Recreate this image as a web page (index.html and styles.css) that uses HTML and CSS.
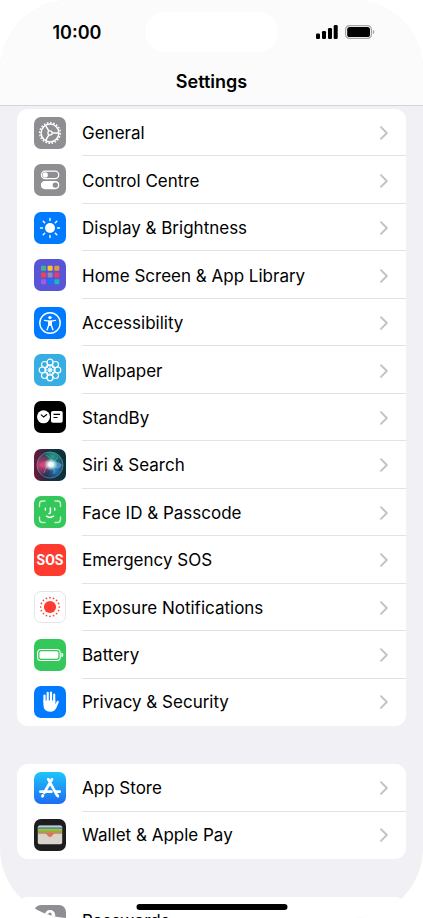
FILE: index.html
```html
<!DOCTYPE html>
<html lang="en-GB">
<head>
<meta charset="utf-8">
<meta name="viewport" content="width=device-width, initial-scale=1">
<title>Settings</title>
<link rel="stylesheet" href="styles.css">
</head>
<body>
<svg class="defs" aria-hidden="true">
  <defs>
    <symbol id="chevron" viewBox="0 0 8 14"><path d="M1 1.2 6.8 7 1 12.8" fill="none" stroke="#c2c2c5" stroke-width="1.9" stroke-linecap="round" stroke-linejoin="round"/></symbol>
    <radialGradient id="siri-pink" cx=".15" cy=".5" r=".5"><stop offset="0" stop-color="#d5427d"/><stop offset=".6" stop-color="#85305f" stop-opacity=".7"/><stop offset="1" stop-color="#35143a" stop-opacity="0"/></radialGradient>
    <radialGradient id="siri-green" cx=".6" cy=".2" r=".65"><stop offset="0" stop-color="#1fa78c"/><stop offset="1" stop-color="#176d72" stop-opacity="0"/></radialGradient>
    <radialGradient id="siri-blue" cx=".7" cy=".7" r=".5"><stop offset="0" stop-color="#2a86cc"/><stop offset="1" stop-color="#1b3f73" stop-opacity="0"/></radialGradient>
    <radialGradient id="siri-glow"><stop offset="0" stop-color="#fff"/><stop offset=".35" stop-color="#f2ffff" stop-opacity=".95"/><stop offset="1" stop-color="#b9f6f4" stop-opacity="0"/></radialGradient>
    <linearGradient id="siri-back"><stop offset="0" stop-color="#6d1738"/><stop offset=".5" stop-color="#192f46"/><stop offset="1" stop-color="#0b3038"/></linearGradient>
    <linearGradient id="store-back" x2="0" y2="1"><stop offset="0" stop-color="#1ec5fb"/><stop offset="1" stop-color="#1d6df2"/></linearGradient>
  </defs>
</svg>
<div class="phone">
  <header class="topbar">
    <div class="status">
      <time class="clock">10:00</time>
      <div class="island"></div>
      <div class="indicators">
        <svg width="22" height="14" viewBox="0 0 22 14" aria-hidden="true"><rect y="8.5" width="4" height="5.5" rx="1.2"/><rect x="6" y="6" width="4" height="8" rx="1.2"/><rect x="12" y="3" width="4" height="11" rx="1.2"/><rect x="17.7" width="4" height="14" rx="1.2"/></svg>
        <svg width="30" height="14" viewBox="0 0 30 14" aria-hidden="true"><rect x=".6" y=".6" width="25.8" height="12.8" rx="4" fill="#fbfbfb" stroke="#a6a6a6" stroke-width="1.2"/><rect x="2.2" y="2" width="22.8" height="10" rx="2.6"/><path d="M27.8 4.8q1.6.7 1.6 2.2t-1.6 2.2z" fill="#a6a6a6"/></svg>
      </div>
    </div>
    <h1 class="title">Settings</h1>
  </header>

  <main class="content">
    <ul class="card card-system">
      <li><a class="row" href="#general">
        <svg class="icon" viewBox="0 0 32 32" aria-hidden="true"><rect width="32" height="32" rx="7" fill="#8e8e93"/><g fill="none" stroke="#fff"><circle cx="16" cy="16" r="8.9" stroke-width="1.5"/><circle cx="16" cy="16" r="10.3" stroke-width="1.5" pathLength="40" stroke-dasharray="1 1"/><circle cx="16" cy="16" r="2.1" stroke-width="1.3"/><path d="M18.2 16h6.3M14.9 14.1l-3.2-5.5M14.9 17.9l-3.2 5.5" stroke-width="1.5"/></g></svg>
        <span class="detail"><span class="label">General</span><svg class="chevron" aria-hidden="true"><use href="#chevron"/></svg></span></a></li>
      <li><a class="row" href="#control-centre">
        <svg class="icon" viewBox="0 0 32 32" aria-hidden="true"><rect width="32" height="32" rx="7" fill="#8e8e93"/><rect x="7.5" y="7.2" width="17.2" height="7.4" rx="3.7" fill="none" stroke="#fff" stroke-width="1.3"/><circle cx="11.3" cy="10.9" r="2.6" fill="#fff"/><rect x="6.9" y="17" width="18.4" height="8.2" rx="4.1" fill="#fff"/><circle cx="21.3" cy="21.1" r="2.7" fill="#8e8e93"/></svg>
        <span class="detail"><span class="label">Control Centre</span><svg class="chevron" aria-hidden="true"><use href="#chevron"/></svg></span></a></li>
      <li><a class="row" href="#display">
        <svg class="icon" viewBox="0 0 32 32" aria-hidden="true"><rect width="32" height="32" rx="7" fill="#007aff"/><circle cx="16" cy="16" r="5" fill="#fff"/><path d="M16 6.5v2M16 23.5v2M6.5 16h2M23.5 16h2M9.2 9.2l1.5 1.5M21.3 21.3l1.5 1.5M9.2 22.8l1.5-1.5M21.3 10.7l1.5-1.5" stroke="#fff" stroke-width="1.4" stroke-linecap="round"/></svg>
        <span class="detail"><span class="label">Display &amp; Brightness</span><svg class="chevron" aria-hidden="true"><use href="#chevron"/></svg></span></a></li>
      <li><a class="row" href="#home-screen">
        <svg class="icon" viewBox="0 0 32 32" aria-hidden="true"><rect width="32" height="32" rx="7" fill="#5856d6"/><rect x="7" y="6.7" width="5" height="5" rx="1" fill="#40b78a"/><rect x="13.6" y="6.7" width="5" height="5" rx="1" fill="#f9c827"/><rect x="20.3" y="6.7" width="5" height="5" rx="1" fill="#ee9538"/><rect x="7" y="13.5" width="5" height="5" rx="1" fill="#ed4550"/><rect x="13.6" y="13.5" width="5" height="5" rx="1" fill="#908eb0"/><rect x="20.3" y="13.5" width="5" height="5" rx="1" fill="#f23a68"/><rect x="7" y="20.3" width="5" height="5" rx="1" fill="#aa58e4"/><rect x="13.6" y="20.3" width="5" height="5" rx="1" fill="#087bfa"/><rect x="20.3" y="20.3" width="5" height="5" rx="1" fill="#19b6c6"/></svg>
        <span class="detail"><span class="label">Home Screen &amp; App Library</span><svg class="chevron" aria-hidden="true"><use href="#chevron"/></svg></span></a></li>
      <li><a class="row" href="#accessibility">
        <svg class="icon" viewBox="0 0 32 32" aria-hidden="true"><rect width="32" height="32" rx="7" fill="#007aff"/><circle cx="16" cy="16" r="10.2" fill="none" stroke="#fff" stroke-width="1.4"/><circle cx="16" cy="10.6" r="1.7" fill="#fff"/><path d="M10.5 13.4 15 14.1h2l4.5-.7M14.7 14v4.2l-1.6 4.6M17.3 14v4.2l1.6 4.6" fill="none" stroke="#fff" stroke-width="1.4" stroke-linecap="round" stroke-linejoin="round"/><path d="M14.3 13.7h3.4v5h-3.4z" fill="#fff"/></svg>
        <span class="detail"><span class="label">Accessibility</span><svg class="chevron" aria-hidden="true"><use href="#chevron"/></svg></span></a></li>
      <li><a class="row" href="#wallpaper">
        <svg class="icon" viewBox="0 0 32 32" aria-hidden="true"><rect width="32" height="32" rx="7" fill="#36ade3"/><g fill="none" stroke="#fff" stroke-width="1.2"><circle cx="16" cy="8.2" r="3"/><circle cx="21.5" cy="10.5" r="3"/><circle cx="23.8" cy="16" r="3"/><circle cx="21.5" cy="21.5" r="3"/><circle cx="16" cy="23.8" r="3"/><circle cx="10.5" cy="21.5" r="3"/><circle cx="8.2" cy="16" r="3"/><circle cx="10.5" cy="10.5" r="3"/><circle cx="16" cy="16" r="4.5"/><path d="M16 11v10M11 16h10M12.5 12.5l7 7M19.5 12.5l-7 7" stroke-width=".8"/></g><circle cx="16" cy="16" r="1.7" fill="#fff"/></svg>
        <span class="detail"><span class="label">Wallpaper</span><svg class="chevron" aria-hidden="true"><use href="#chevron"/></svg></span></a></li>
      <li><a class="row" href="#standby">
        <svg class="icon" viewBox="0 0 32 32" aria-hidden="true"><rect width="32" height="32" rx="7"/><circle cx="9.5" cy="15.8" r="6.5" fill="#fff"/><path d="M7.2 13.8 9.6 16l3.1-2.5" fill="none" stroke="#000" stroke-width="1.1" stroke-linecap="round"/><rect x="17" y="10" width="11.7" height="11.7" rx="1.8" fill="#fff"/><path d="M19.5 13.4h6.6M19.5 16.5h4" stroke="#000" stroke-width="1.1"/></svg>
        <span class="detail"><span class="label">StandBy</span><svg class="chevron" aria-hidden="true"><use href="#chevron"/></svg></span></a></li>
      <li><a class="row" href="#siri">
        <svg class="icon" viewBox="0 0 32 32" aria-hidden="true"><rect width="32" height="32" rx="7" fill="url(#siri-back)"/><circle cx="16" cy="16" r="13.3" fill="#203451"/><circle cx="16" cy="16" r="13.3" fill="url(#siri-green)"/><circle cx="16" cy="16" r="13.3" fill="url(#siri-blue)"/><circle cx="16" cy="16" r="13.3" fill="url(#siri-pink)"/><path d="M16 15c4-4 10-2 12 1-3 6-8 4-12-1z" fill="#79c5ed" opacity=".5"/><path d="M17 15c-3-4-8-5-11 1 3 6 8 3 11-1z" fill="#ed4f81" opacity=".55"/><path d="M12 6q8 4 4 10 6 4 4 9M24 8q-4 7-9 8-4 2-5 8" fill="none" stroke="#9ce8dc" stroke-width="1" opacity=".35"/><circle cx="16" cy="16" r="13" fill="none" stroke="#7ca9a9" stroke-width=".7" opacity=".75"/><ellipse cx="16.8" cy="15.5" rx="7" ry="6.5" fill="url(#siri-glow)"/></svg>
        <span class="detail"><span class="label">Siri &amp; Search</span><svg class="chevron" aria-hidden="true"><use href="#chevron"/></svg></span></a></li>
      <li><a class="row" href="#face-id">
        <svg class="icon" viewBox="0 0 32 32" aria-hidden="true"><rect width="32" height="32" rx="7" fill="#34c759"/><g fill="none" stroke="#fff" stroke-linecap="round"><path d="M5.5 10.5V8Q5.5 5 8.5 5H11M21 5h2.5q3 0 3 3v2.5M26.5 21v2.5q0 3-3 3H21M11 26.5H8.5q-3 0-3-3V21" stroke-width="1.4" opacity=".75"/><path d="M11.4 12.3v1.7M20.7 12.3v1.7M16.4 12v4.3q0 1.3-1.4 1.3M12.5 20.2q3.5 2.5 7 0" stroke-width="1.5"/></g></svg>
        <span class="detail"><span class="label">Face ID &amp; Passcode</span><svg class="chevron" aria-hidden="true"><use href="#chevron"/></svg></span></a></li>
      <li><a class="row" href="#sos">
        <svg class="icon" viewBox="0 0 32 32" aria-hidden="true"><rect width="32" height="32" rx="7" fill="#ff3b30"/><text class="sos" x="16" y="21" text-anchor="middle">SOS</text></svg>
        <span class="detail"><span class="label">Emergency SOS</span><svg class="chevron" aria-hidden="true"><use href="#chevron"/></svg></span></a></li>
      <li><a class="row" href="#exposure">
        <svg class="icon" viewBox="0 0 32 32" aria-hidden="true"><rect x=".5" y=".5" width="31" height="31" rx="6.5" fill="#fff" stroke="#e5e5e7"/><circle cx="16" cy="16" r="6.1" fill="#ff3b30"/><circle cx="16" cy="16" r="9.3" fill="none" stroke="#ff3b30" stroke-width="1.7" stroke-linecap="round" pathLength="160" stroke-dasharray="0 10"/></svg>
        <span class="detail"><span class="label">Exposure Notifications</span><svg class="chevron" aria-hidden="true"><use href="#chevron"/></svg></span></a></li>
      <li><a class="row" href="#battery">
        <svg class="icon" viewBox="0 0 32 32" aria-hidden="true"><rect width="32" height="32" rx="7" fill="#34c759"/><rect x="3.6" y="10.5" width="22.6" height="11" rx="3.3" fill="none" stroke="#fff" stroke-width="1.1"/><rect x="5.4" y="12.3" width="19" height="7.4" rx="1.7" fill="#fff"/><path d="M27.4 13.7q2 .6 2 2.3t-2 2.3z" fill="#fff"/></svg>
        <span class="detail"><span class="label">Battery</span><svg class="chevron" aria-hidden="true"><use href="#chevron"/></svg></span></a></li>
      <li><a class="row" href="#privacy">
        <svg class="icon" viewBox="0 0 32 32" aria-hidden="true"><rect width="32" height="32" rx="7" fill="#007aff"/><path d="M10.5 16V9.5M13.7 15V6.8M17 15V6.5M20.2 16V8.5" stroke="#fff" stroke-width="2.2" stroke-linecap="round"/><path d="M9.4 14.5h11.9v3.8l1.3-2.6q.8-1.5 1.8-.9.8.5.2 1.9l-2.1 4.9q-1.7 4.2-6.2 4.2-6.9 0-6.9-7.2z" fill="#fff"/></svg>
        <span class="detail"><span class="label">Privacy &amp; Security</span><svg class="chevron" aria-hidden="true"><use href="#chevron"/></svg></span></a></li>
    </ul>

    <ul class="card card-store">
      <li><a class="row" href="#app-store">
        <svg class="icon" viewBox="0 0 32 32" aria-hidden="true"><rect width="32" height="32" rx="7" fill="url(#store-back)"/><g stroke="#fff" stroke-width="2.7" stroke-linecap="round"><path d="M14.2 7.2 22.9 23.2M18 7.2 10.2 20.7M6.4 19.7h11M22 19.7h3.7M9 23.3l-.6 1M23.5 23.3l.4.9"/></g></svg>
        <span class="detail"><span class="label">App Store</span><svg class="chevron" aria-hidden="true"><use href="#chevron"/></svg></span></a></li>
      <li><a class="row" href="#wallet">
        <svg class="icon" viewBox="0 0 32 32" aria-hidden="true"><rect width="32" height="32" rx="7" fill="#1d1d1f"/><rect x="3.8" y="6.5" width="24.4" height="18.7" rx="1.8" fill="#d8d4c9"/><path d="M4 8.3q0-1.5 1.5-1.5h21q1.5 0 1.5 1.5z" fill="#a7d1e0"/><path d="M4 8.3h24v2H4z" fill="#648c83"/><path d="M4 10.3h24v3H4z" fill="#8fbe37"/><path d="M4 12.6h24v1.2H4z" fill="#c08a3c"/><path d="M4 13.6h24v1.2h-7.5q-1.3 0-2.2 1.8-2.3 2.4-4.6 0-.9-1.8-2.2-1.8H4z" fill="#b08a60"/><path d="M11.5 14.3h9q-1.3.5-2.2 2.3-2.3 2.4-4.6 0-.9-1.8-2.2-2.3z" fill="#ee6a5a"/></svg>
        <span class="detail"><span class="label">Wallet &amp; Apple Pay</span><svg class="chevron" aria-hidden="true"><use href="#chevron"/></svg></span></a></li>
    </ul>

    <ul class="card">
      <li><a class="row" href="#passwords">
        <svg class="icon" viewBox="0 0 32 32" aria-hidden="true"><rect width="32" height="32" rx="7" fill="#8e8e93"/><path fill-rule="evenodd" d="M16 5a5.5 5.5 0 0 1 2 10.5V25l-2 2-2-2v-9.5A5.5 5.5 0 0 1 16 5zm0 2.4a1.7 1.7 0 1 0 0 3.4 1.7 1.7 0 0 0 0-3.4z" fill="#fff"/></svg>
        <span class="detail"><span class="label">Passwords</span><svg class="chevron" aria-hidden="true"><use href="#chevron"/></svg></span></a></li>
    </ul>
  </main>
  <div class="home-indicator"></div>
</div>
</body>
</html>
```
FILE: styles.css
```css
* {
  box-sizing: border-box;
}

body {
  margin: 0;
  background: #fff;
  color: #000;
  font-family: Inter, "Liberation Sans", sans-serif;
}

.defs {
  position: absolute;
  width: 0;
  height: 0;
}

.phone {
  position: relative;
  height: 100vh;
  overflow: hidden;
  border-radius: 70px;
  background: #f0f0f5;
}

.topbar {
  height: 106px;
  padding-top: 12px;
  border-bottom: 1px solid #d4d4d8;
  background: #fbfbfb;
}

.status {
  display: grid;
  grid-template-columns: 1fr 133px 1fr;
  align-items: center;
}

.clock {
  padding-left: 9px;
  font-size: 18px;
  font-weight: 600;
  text-align: center;
}

.island {
  height: 40px;
  border-radius: 20px;
  background: #fff;
}

.indicators {
  display: flex;
  justify-content: center;
  gap: 7px;
  padding-right: 11px;
}

.title {
  margin: 18px 0 0;
  font-size: 18px;
  font-weight: 600;
  line-height: 24px;
  text-align: center;
}

.content {
  display: flex;
  flex-direction: column;
  gap: 38px;
  padding: 3px 17px 0;
}

.card {
  display: grid;
  grid-auto-rows: 1fr;
  margin: 0;
  padding: 0;
  border-radius: 11px;
  background: #fff;
  list-style: none;
}

.card-system {
  min-height: 617px;
}

.card-store {
  min-height: 95px;
}

.card li {
  display: grid;
  min-height: 47px;
}

.row {
  display: flex;
  align-items: center;
  padding-left: 17px;
  color: inherit;
  text-decoration: none;
}

.icon {
  flex: none;
  width: 32px;
  height: 32px;
  margin-right: 16px;
}

.detail {
  display: flex;
  flex: 1;
  align-items: center;
  align-self: stretch;
  justify-content: space-between;
  padding-right: 18px;
}

.card li:not(:last-child) .detail {
  padding-top: 2px;
  border-bottom: 1px solid #e3e3e5;
}

.label {
  font-size: 17px;
  line-height: 24px;
}

.chevron {
  flex: none;
  width: 8px;
  height: 14px;
}

.sos {
  fill: #fff;
  font-family: "Liberation Sans Narrow", Roboto, sans-serif;
  font-size: 14px;
  font-weight: 700;
}

.home-indicator {
  position: absolute;
  bottom: 8px;
  left: 50%;
  width: 151px;
  height: 6px;
  border-radius: 3px;
  background: #000;
  transform: translateX(-50%);
}
```
